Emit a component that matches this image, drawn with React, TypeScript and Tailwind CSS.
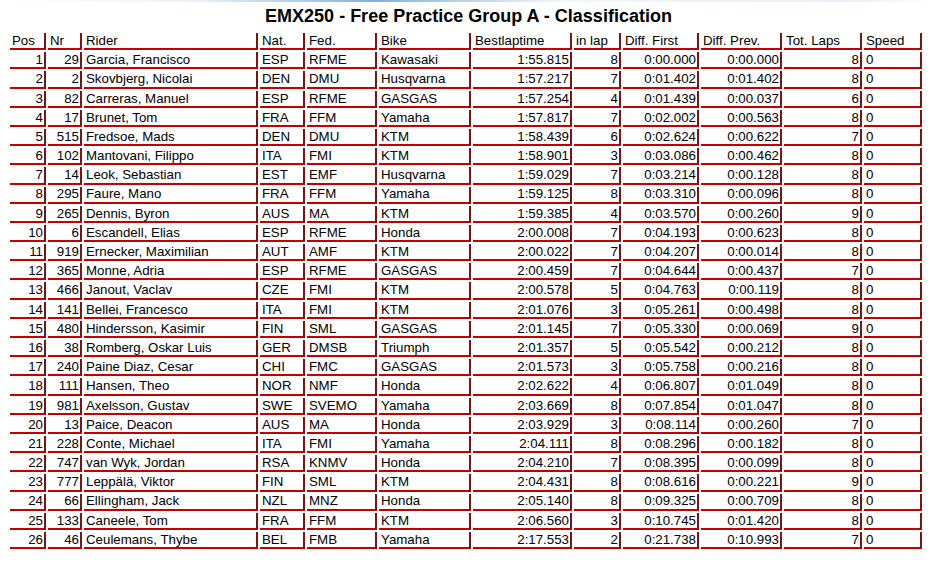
import React from "react";

const rows: string[][] = [
  ["1","29","Garcia, Francisco","ESP","RFME","Kawasaki","1:55.815","8","0:00.000","0:00.000","8","0"],
  ["2","2","Skovbjerg, Nicolai","DEN","DMU","Husqvarna","1:57.217","7","0:01.402","0:01.402","8","0"],
  ["3","82","Carreras, Manuel","ESP","RFME","GASGAS","1:57.254","4","0:01.439","0:00.037","6","0"],
  ["4","17","Brunet, Tom","FRA","FFM","Yamaha","1:57.817","7","0:02.002","0:00.563","8","0"],
  ["5","515","Fredsoe, Mads","DEN","DMU","KTM","1:58.439","6","0:02.624","0:00.622","7","0"],
  ["6","102","Mantovani, Filippo","ITA","FMI","KTM","1:58.901","3","0:03.086","0:00.462","8","0"],
  ["7","14","Leok, Sebastian","EST","EMF","Husqvarna","1:59.029","7","0:03.214","0:00.128","8","0"],
  ["8","295","Faure, Mano","FRA","FFM","Yamaha","1:59.125","8","0:03.310","0:00.096","8","0"],
  ["9","265","Dennis, Byron","AUS","MA","KTM","1:59.385","4","0:03.570","0:00.260","9","0"],
  ["10","6","Escandell, Elias","ESP","RFME","Honda","2:00.008","7","0:04.193","0:00.623","8","0"],
  ["11","919","Ernecker, Maximilian","AUT","AMF","KTM","2:00.022","7","0:04.207","0:00.014","8","0"],
  ["12","365","Monne, Adria","ESP","RFME","GASGAS","2:00.459","7","0:04.644","0:00.437","7","0"],
  ["13","466","Janout, Vaclav","CZE","FMI","KTM","2:00.578","5","0:04.763","0:00.119","8","0"],
  ["14","141","Bellei, Francesco","ITA","FMI","KTM","2:01.076","3","0:05.261","0:00.498","8","0"],
  ["15","480","Hindersson, Kasimir","FIN","SML","GASGAS","2:01.145","7","0:05.330","0:00.069","9","0"],
  ["16","38","Romberg, Oskar Luis","GER","DMSB","Triumph","2:01.357","5","0:05.542","0:00.212","8","0"],
  ["17","240","Paine Diaz, Cesar","CHI","FMC","GASGAS","2:01.573","3","0:05.758","0:00.216","8","0"],
  ["18","111","Hansen, Theo","NOR","NMF","Honda","2:02.622","4","0:06.807","0:01.049","8","0"],
  ["19","981","Axelsson, Gustav","SWE","SVEMO","Yamaha","2:03.669","8","0:07.854","0:01.047","8","0"],
  ["20","13","Paice, Deacon","AUS","MA","Honda","2:03.929","3","0:08.114","0:00.260","7","0"],
  ["21","228","Conte, Michael","ITA","FMI","Yamaha","2:04.111","8","0:08.296","0:00.182","8","0"],
  ["22","747","van Wyk, Jordan","RSA","KNMV","Honda","2:04.210","7","0:08.395","0:00.099","8","0"],
  ["23","777","Leppälä, Viktor","FIN","SML","KTM","2:04.431","8","0:08.616","0:00.221","9","0"],
  ["24","66","Ellingham, Jack","NZL","MNZ","Honda","2:05.140","8","0:09.325","0:00.709","8","0"],
  ["25","133","Caneele, Tom","FRA","FFM","KTM","2:06.560","3","0:10.745","0:01.420","8","0"],
  ["26","46","Ceulemans, Thybe","BEL","FMB","Yamaha","2:17.553","2","0:21.738","0:10.993","7","0"],
];

const headers = ["Pos","Nr","Rider","Nat.","Fed.","Bike","Bestlaptime","in lap","Diff. First","Diff. Prev.","Tot. Laps","Speed"];
const rightAligned = [true,true,false,false,false,false,true,true,true,true,true,false];

const gridCls =
  "grid grid-cols-[36px_34px_174px_45px_70px_92px_99px_47px_76px_81px_78px_58px] gap-x-[2px]";

function Cell({ text, right }: { text: string; right: boolean }) {
  return (
    <div
      className={
        "h-[17.2px] flex items-center border-r-2 border-b-2 border-r-[#7d1313] border-b-[#c40000] pl-[2px] pr-[1px] whitespace-nowrap overflow-hidden leading-none " +
        (right ? "justify-end" : "justify-start")
      }
    >
      {text}
    </div>
  );
}

export default function App() {
  return (
    <div
      className="w-[937px] h-[565px] bg-white text-black overflow-hidden"
      style={{ fontFamily: '"Liberation Sans", Arial, sans-serif' }}
    >
      <div className="h-[2px] w-full bg-[linear-gradient(90deg,#ffffff_0%,#e6eef6_20%,#9cc3e6_30%,#4a8fd0_40%,#9cc3e6_50%,#eef3f8_60%,#dfe8f2_90%,#ffffff_100%)] opacity-70" />
      <div className="h-[28px] flex items-center justify-center text-[18px] font-bold">
        EMX250 - Free Practice Group A - Classification
      </div>
      <div className="pl-[10px] pt-[3px] flex flex-col gap-y-[2px] text-[13.3px]">
        <div className={gridCls}>
          {headers.map((h, i) => (
            <Cell key={i} text={h} right={false} />
          ))}
        </div>
        {rows.map((r, ri) => (
          <div key={ri} className={gridCls}>
            {r.map((c, ci) => (
              <Cell key={ci} text={c} right={rightAligned[ci]} />
            ))}
          </div>
        ))}
      </div>
    </div>
  );
}
